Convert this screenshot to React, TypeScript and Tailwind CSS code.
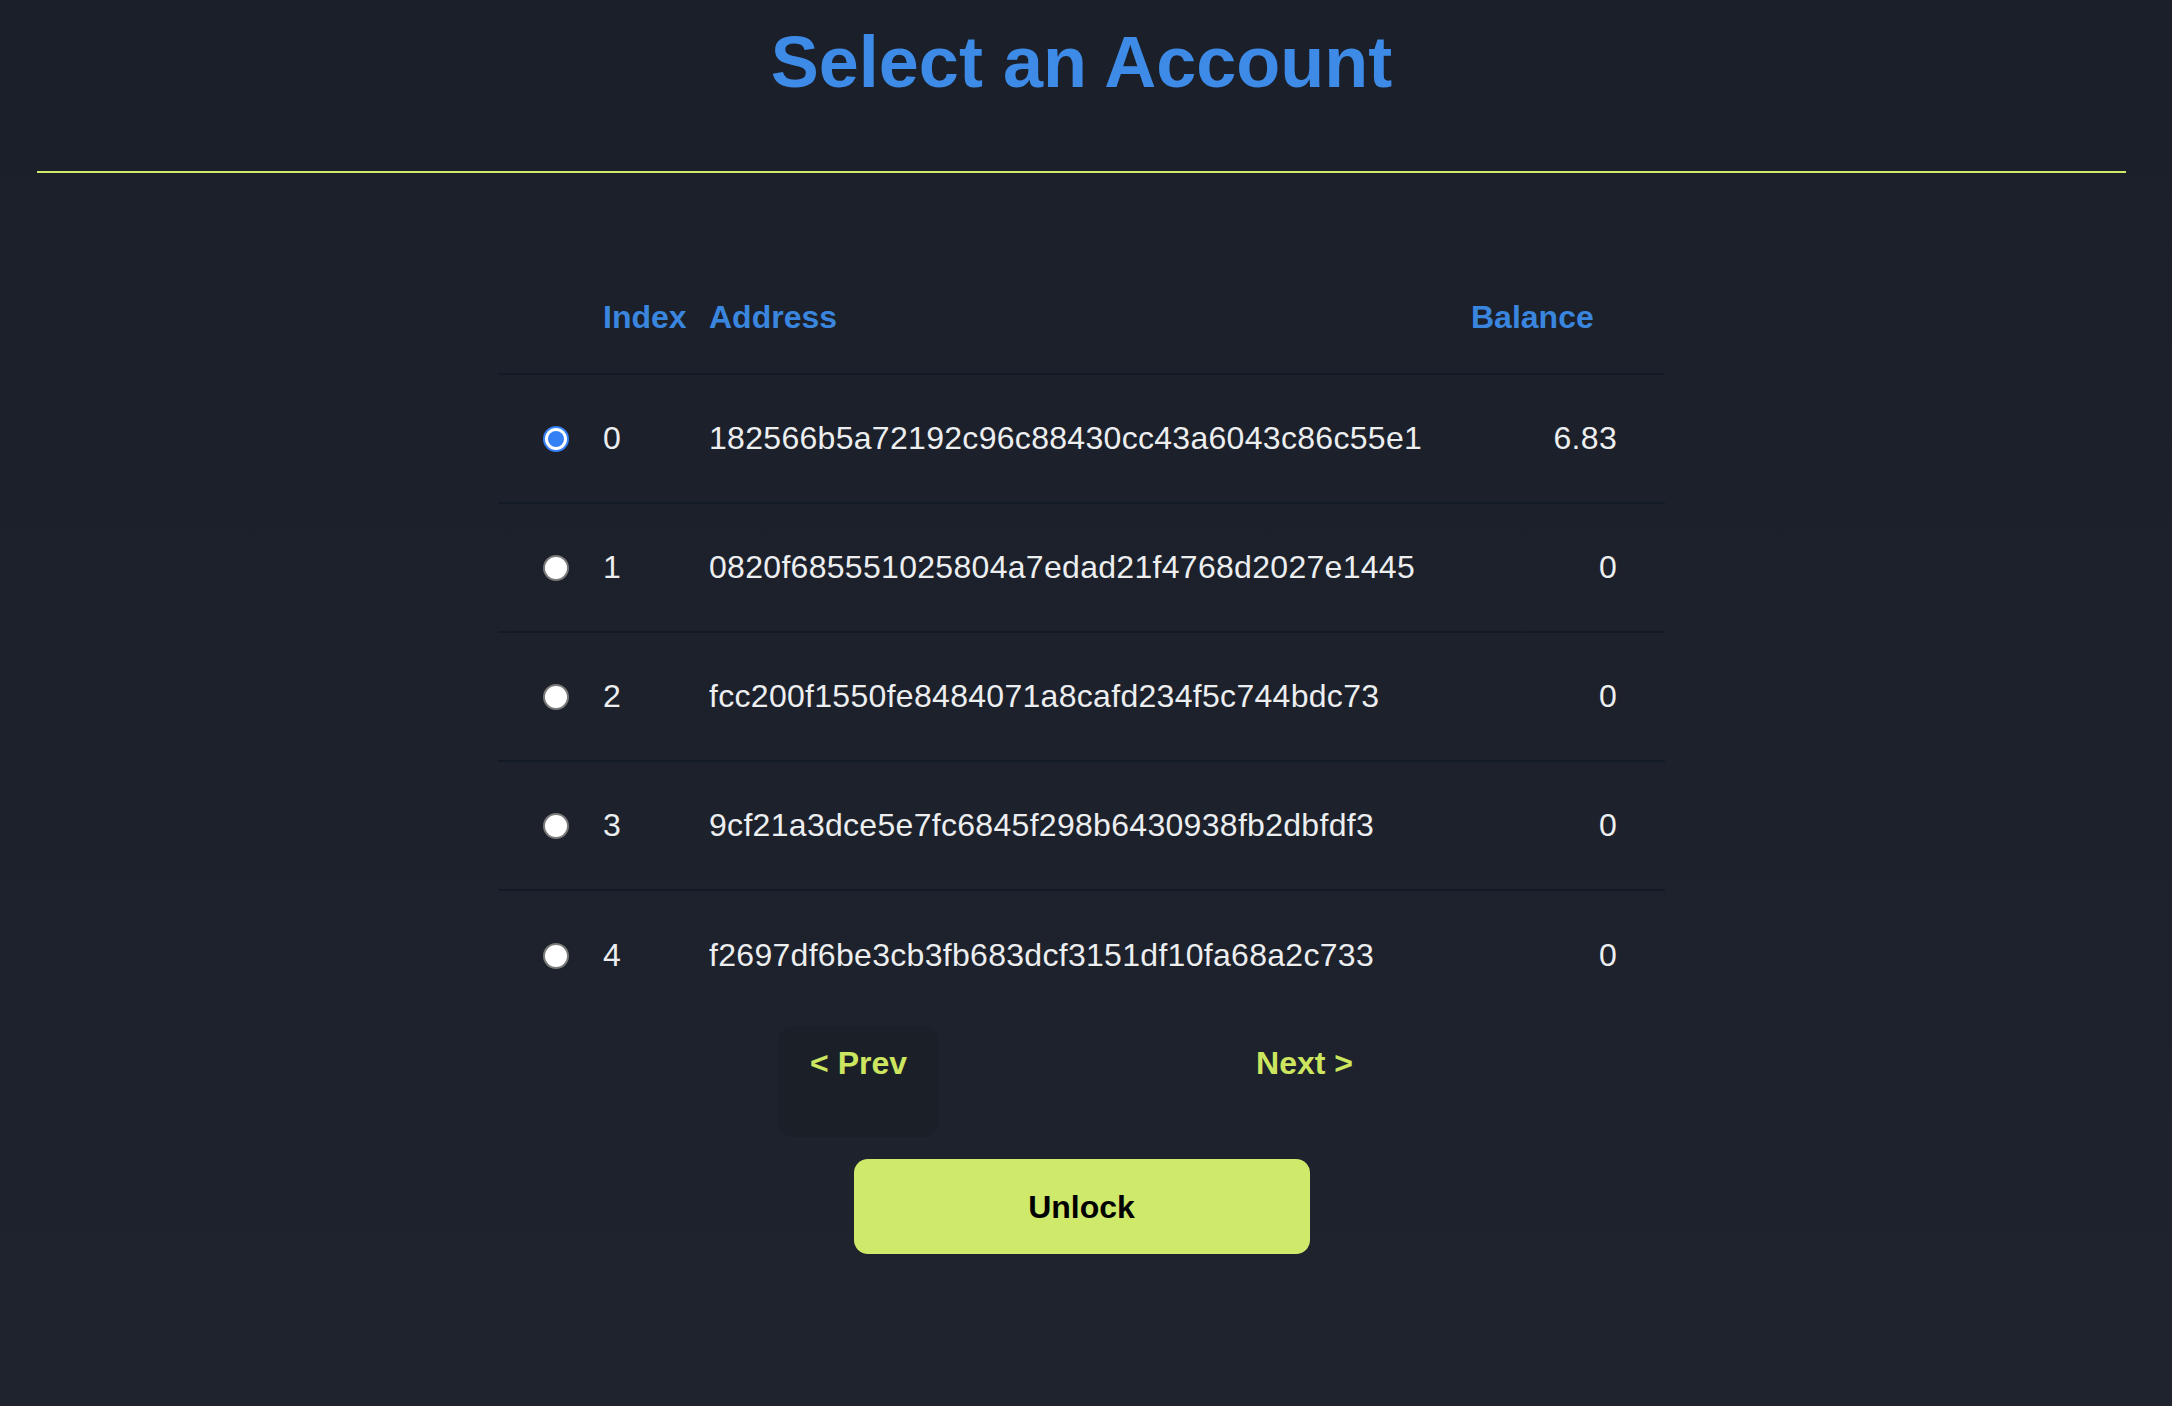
import React from "react";

const rows = [
  { i: 0, addr: "182566b5a72192c96c88430cc43a6043c86c55e1", bal: "6.83" },
  { i: 1, addr: "0820f685551025804a7edad21f4768d2027e1445", bal: "0" },
  { i: 2, addr: "fcc200f1550fe8484071a8cafd234f5c744bdc73", bal: "0" },
  { i: 3, addr: "9cf21a3dce5e7fc6845f298b6430938fb2dbfdf3", bal: "0" },
  { i: 4, addr: "f2697df6be3cb3fb683dcf3151df10fa68a2c733", bal: "0" },
];

function Radio({ checked }: { checked: boolean }) {
  if (checked) {
    return (
      <div className="w-[26px] h-[26px] rounded-full bg-[#3580f4] p-[2px]">
        <div className="w-full h-full rounded-full bg-white p-[3px]">
          <div className="w-full h-full rounded-full bg-[#3580f4]" />
        </div>
      </div>
    );
  }
  return <div className="w-[26px] h-[26px] rounded-full bg-white border-[2px] border-[#7a7a7a]" />;
}

export default function App() {
  return (
    <div
      className="w-full h-[1406px] bg-linear-to-b from-[#1a1f29] to-[#1f232d] pr-[9px] text-[#eceef0]"
      style={{ fontFamily: '"Liberation Sans", Arial, sans-serif' }}
    >
      <div className="pt-[22px] flex flex-col items-center">
        <h1 className="text-[72px] leading-[80px] font-bold text-[#3d8be7]">Select an Account</h1>
      </div>
      <div className="mt-[69px] mx-[37px] h-[2px] bg-[#cfe96b]" />

      <div className="mt-[89px] mx-auto w-[1167px]">
        <div className="flex items-center h-[113px] border-b-[2px] border-[#121a26] text-[32px] leading-[37px] font-bold text-[#3a86df]">
          <div className="w-[105px]" />
          <div className="w-[106px]">Index</div>
          <div className="w-[762px]">Address</div>
          <div className="w-[146px]">Balance</div>
        </div>
        {rows.map((r, idx) => (
          <div
            key={r.i}
            className={
              "flex items-center h-[129px] text-[32px] leading-[37px] tracking-[0.3px] " +
              (idx < rows.length - 1 ? "border-b-[2px] border-[#121a26]" : "")
            }
          >
            <div className="w-[105px] pl-[45px]">
              <Radio checked={idx === 0} />
            </div>
            <div className="w-[106px]">{r.i}</div>
            <div className="w-[762px]">{r.addr}</div>
            <div className="w-[146px] text-right">{r.bal}</div>
          </div>
        ))}
      </div>

      <div className="mt-[6px] flex justify-center gap-[285px] text-[32px] leading-[37px] font-bold text-[#cde660]">
        <button className="px-[32px] pt-[19px] pb-[55px] rounded-[16px] bg-[#1b1f28]">&lt; Prev</button>
        <button className="px-[32px] pt-[19px] pb-[55px] rounded-[16px]">Next &gt;</button>
      </div>

      <div className="mt-[22px] flex justify-center">
        <button className="w-[456px] h-[95px] rounded-[14px] bg-[#cfe96b] text-black text-[32px] font-bold">
          Unlock
        </button>
      </div>
    </div>
  );
}
